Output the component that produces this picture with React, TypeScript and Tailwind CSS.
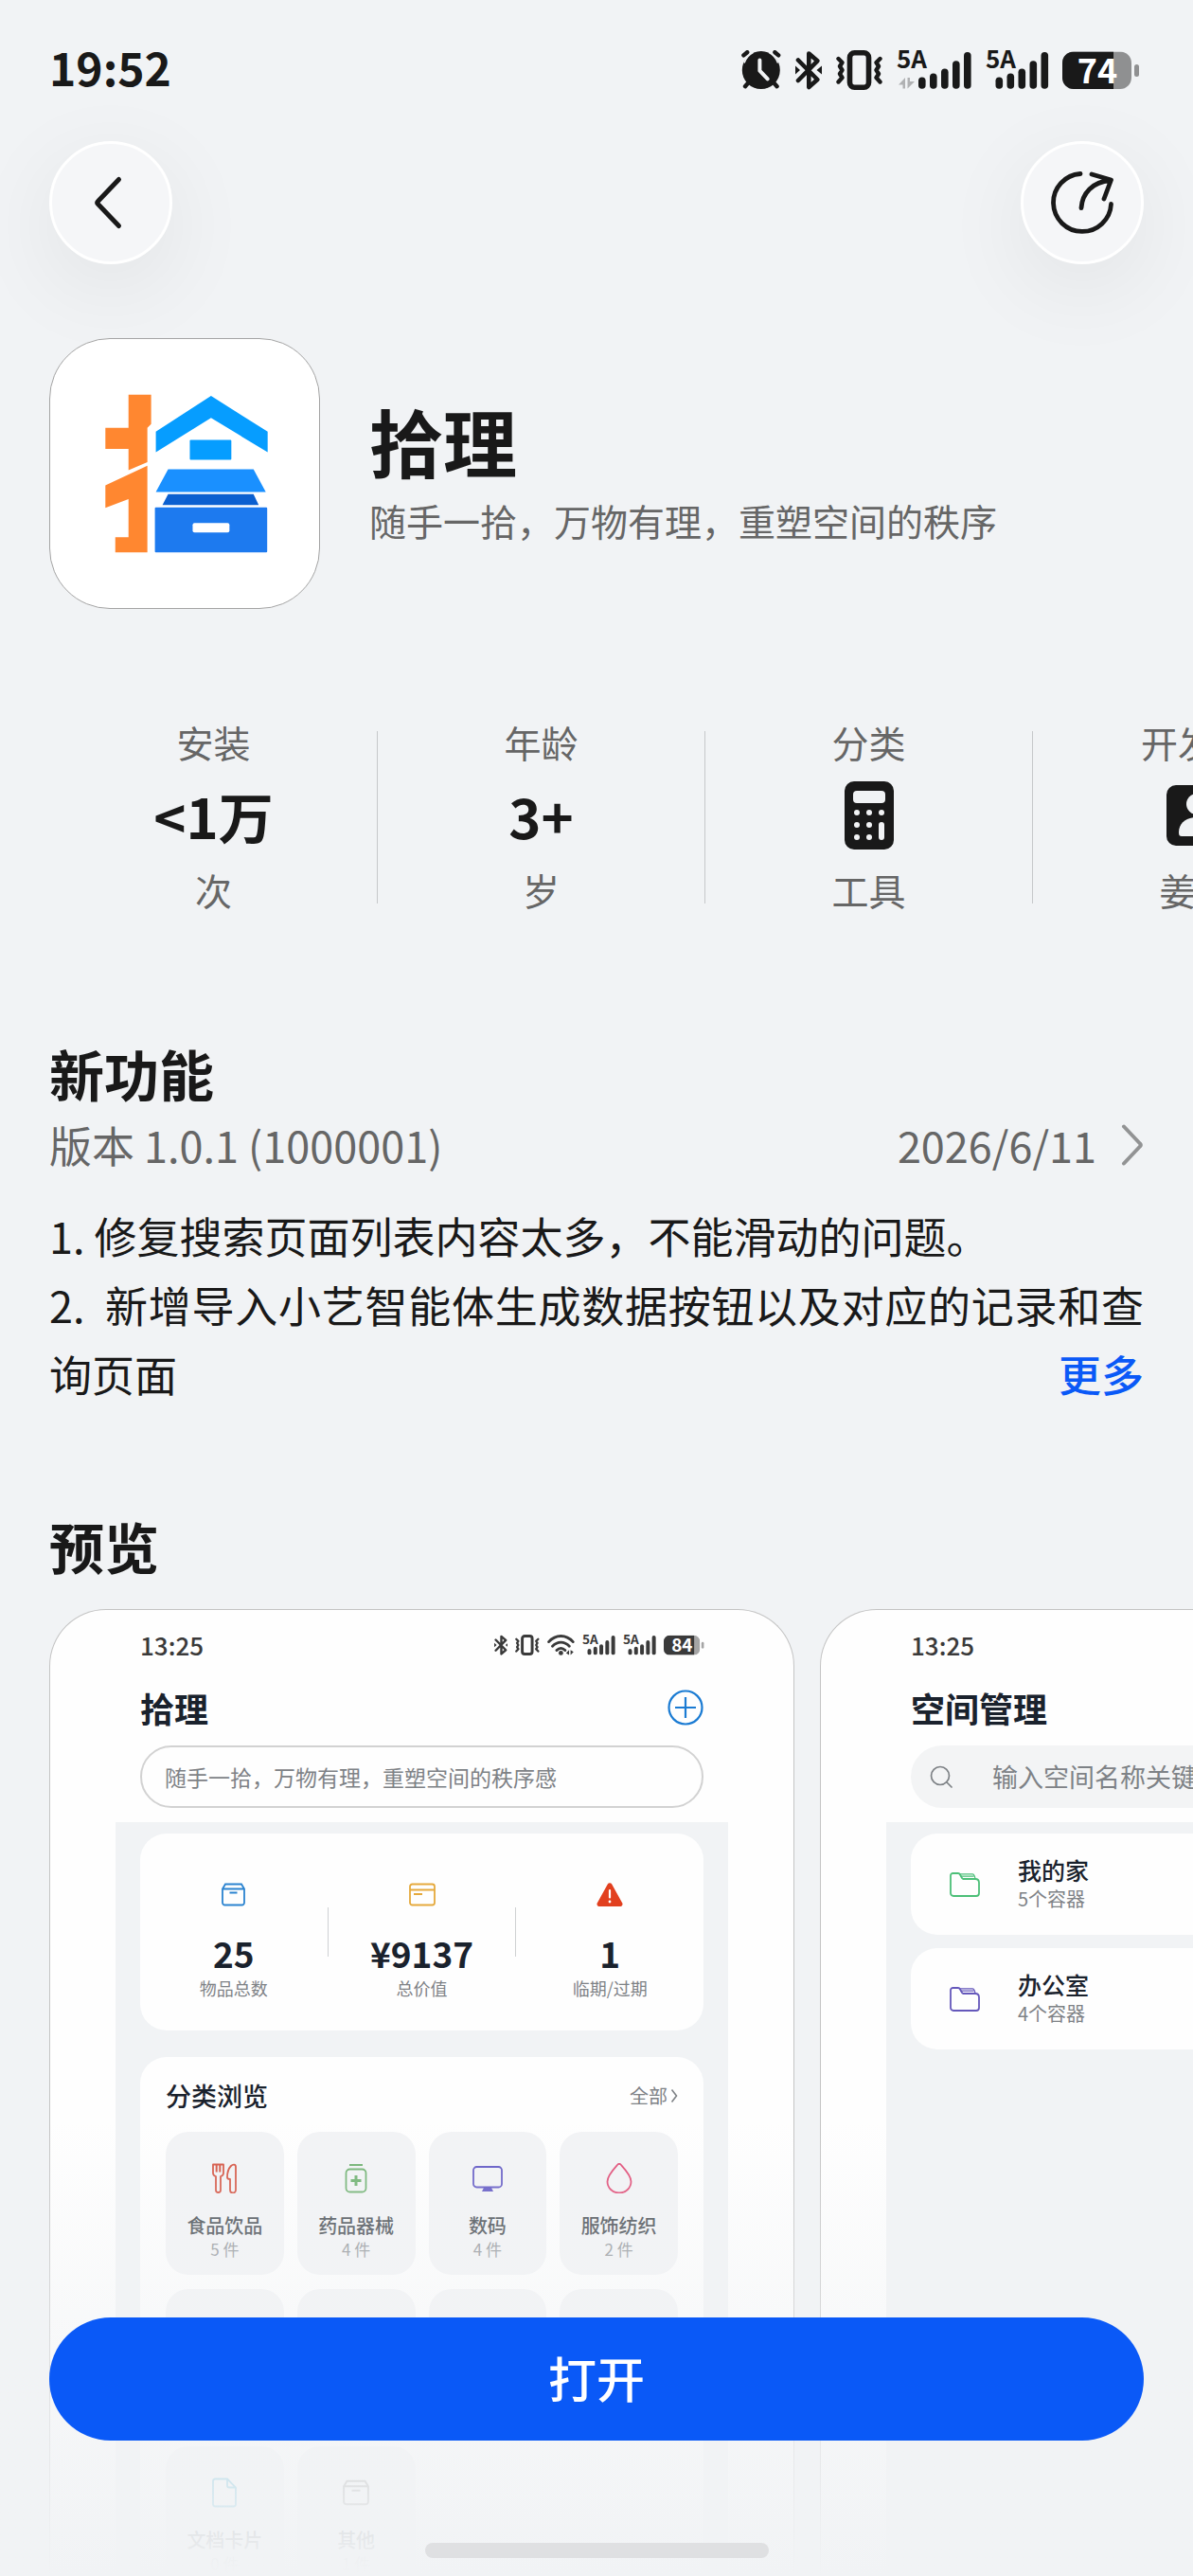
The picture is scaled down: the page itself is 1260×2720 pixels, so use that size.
import React from 'react';

// ============================================
// App store detail page
// ============================================

interface IconProps {
  className?: string;
}

interface BatteryProps extends IconProps {
  level: number;
}

interface SignalProps extends IconProps {
  activity?: boolean;
}

/* ---------- Status bar icons ---------- */

function AlarmIcon({ className }: IconProps) {
  return (
    <svg viewBox="0 0 42 42" className={className} fill="currentColor" aria-hidden="true">
      <circle cx="20.8" cy="21" r="20" />
      <path d="M3 13.4A20 20 0 0 1 12.6 2.4M29 2.4a20 20 0 0 1 9.6 11" fill="none" stroke="#f1f3f5" strokeWidth="1.6" />
      <g stroke="currentColor" strokeWidth="4.4" strokeLinecap="round">
        <path d="M2.4 5.4 6.2 2.2M39.2 5.4 35.4 2.2M9 32.5 4 38.2M32.6 32.5l5 5.7" />
      </g>
      <path
        d="M19.4 10.5v11.2l8.3 8.6"
        fill="none"
        stroke="#f1f3f5"
        strokeWidth="4"
        strokeLinecap="round"
        strokeLinejoin="round"
      />
    </svg>
  );
}

function BluetoothIcon({ className }: IconProps) {
  return (
    <svg viewBox="0 0 28 42" className={className} fill="none" aria-hidden="true">
      <path
        d="M3 10.5 23.3 31 14.3 39V3.5l9 7.8L3 32"
        stroke="currentColor"
        strokeWidth="4.6"
        strokeLinecap="round"
        strokeLinejoin="round"
      />
      <path d="M0 16.5 5 21 0 25.5zM28 16.5 22.5 21l5.5 4.5z" fill="currentColor" />
    </svg>
  );
}

function VibrateIcon({ className }: IconProps) {
  return (
    <svg viewBox="0 0 49 42" className={className} fill="none" stroke="currentColor" aria-hidden="true">
      <rect x="14.5" y="2.8" width="20" height="36.4" rx="5" strokeWidth="5.6" />
      <path
        d="M2.5 9l4 4-2.5 4 2.5 4-2.5 4 2.5 4-4 4.500M46.500 9l-4 4 2.500 4-2.500 4 2.500 4-2.500 4 4 4.500"
        strokeWidth="4.4"
        strokeLinecap="round"
        strokeLinejoin="round"
      />
    </svg>
  );
}

function WifiIcon({ className }: IconProps) {
  return (
    <svg viewBox="0 0 56 42" className={className} fill="none" stroke="currentColor" aria-hidden="true">
      <path
        d="M3 14.5C17-1 38-1 52 14.5M10.5 23.5c10-10.5 24-10.5 34 0M19 31.5c5.5-5.5 11.5-5.5 17 0"
        strokeWidth="5.4"
        strokeLinecap="round"
      />
      <circle cx="27.5" cy="37" r="4.6" fill="currentColor" stroke="none" />
      <path d="M38 37 44 31v10zM47 31v10l6-6z" fill="currentColor" stroke="none" />
    </svg>
  );
}

function SignalIcon({ className, activity }: SignalProps) {
  const start = activity ? 23 : 10.5;
  const tops = [28.5, 24.5, 19.5, 11.3, 2];

  return (
    <svg
      viewBox={activity ? '0 0 79 42' : '0 0 66 42'}
      className={`overflow-visible ${className}`}
      fill="currentColor"
      aria-hidden="true"
    >
      <text x="0" y="19" fontSize="26" fontWeight="600">
        5A
      </text>
      {activity && <path opacity="0.3" d="M2 36.5 9 29v11.5H6.5v-4zM11.5 29v11.5L19 33h-5v-4z" />}
      {tops.map((top, i) => (
        <rect key={top} x={start + i * 12} y={top} width="7.6" height={40.8 - top} rx="3.8" />
      ))}
    </svg>
  );
}

function BatteryIcon({ className, level }: BatteryProps) {
  return (
    <svg viewBox="0 0 81 42" className={`overflow-visible ${className}`} aria-hidden="true">
      <defs>
        <clipPath id={`battery-${level}`}>
          <rect y="1.5" width="73" height="39.5" rx="12" />
        </clipPath>
      </defs>
      <g clipPath={`url(#battery-${level})`} fill="currentColor">
        <rect y="1.5" width="73" height="39.5" opacity="0.45" />
        <rect y="1.5" width={(73 * level) / 100} height="39.5" />
      </g>
      <rect x="76" y="15" width="5" height="13" rx="2.5" fill="currentColor" opacity="0.45" />
      <text x="37" y="34.5" fontSize="36" fontWeight="700" textAnchor="middle" fill="#fff">
        {level}
      </text>
    </svg>
  );
}

/* ---------- App icons ---------- */

function AppLogo() {
  return (
    <svg viewBox="0 0 285 285" className="w-full" aria-hidden="true">
      <g fill="#ff8730">
        <path d="M83 59h24v31l-4 4v36.5L83 139v-22.5H58.5V94H83z" />
        <path d="M103 134.3V226H69v-16h14v-40.5L58.5 179v-24z" />
      </g>
      <g fill="#069dff">
        <path d="M170.5 60.3 230.5 98v22l-60-36.5L112 120V98z" />
        <rect x="148" y="107" width="44" height="21" rx="1" />
      </g>
      <path d="M125 138h90.5l13 24H112z" fill="#1a90ff" />
      <path d="M125 164.3h90.5l5.5 11.5H119z" fill="#0a5fd0" />
      <rect x="111" y="178.3" width="119" height="47.7" rx="1" fill="#1d7aef" />
      <rect x="151" y="195" width="39" height="10" rx="2" fill="#fff" />
    </svg>
  );
}

function CalculatorIcon() {
  return (
    <svg viewBox="0 0 52 72" className="h-[72px]" aria-hidden="true">
      <rect width="52" height="72" rx="10" fill="#191919" />
      <g fill="#f1f3f5">
        <rect x="9" y="10" width="34" height="13" rx="4" />
        {[33, 46, 59].map((y) =>
          [13, 26, 39].map((x) => (x === 39 && y > 40 ? null : <circle key={`${x}-${y}`} cx={x} cy={y} r="3" />))
        )}
        <rect x="36" y="43" width="6" height="19" rx="3" />
      </g>
    </svg>
  );
}

function ContactIcon() {
  return (
    <svg viewBox="0 0 64 64" className="h-16" aria-hidden="true">
      <rect width="64" height="64" rx="10" fill="#191919" />
      <circle cx="32" cy="20" r="11" fill="#f1f3f5" />
      <path d="M13 50c0-10 8-16 19-16s19 6 19 16c0 3-1 4-3 4H16c-2 0-3-1-3-4z" fill="#f1f3f5" />
    </svg>
  );
}

function BoxIcon({ className }: IconProps) {
  return (
    <svg viewBox="0 0 25 25" className={className} fill="none" stroke="currentColor" strokeWidth="1.8" aria-hidden="true">
      <path d="M1 6.5 4 1.5h17l3 5V21a2.5 2.5 0 0 1-2.5 2.5h-18A2.5 2.5 0 0 1 1 21zM1 6.5h23M8.5 10.5h8" />
    </svg>
  );
}

function WalletIcon({ className }: IconProps) {
  return (
    <svg viewBox="0 0 28 25" className={className} fill="none" stroke="currentColor" strokeWidth="1.8" aria-hidden="true">
      <rect x="1" y="1.5" width="26" height="22" rx="2.5" />
      <path d="M1 7.5h26M5 12h9" />
    </svg>
  );
}

function WarningIcon({ className }: IconProps) {
  return (
    <svg viewBox="0 0 28 25" className={className} aria-hidden="true">
      <path d="M11.8 1.5a2.5 2.5 0 0 1 4.400 0L27 21a2.500 2.500 0 0 1-2.200 4H3.200A2.500 2.500 0 0 1 1 21z" fill="#e2401f" />
      <path d="M14 8v7.5" stroke="#fff" strokeWidth="2.2" strokeLinecap="round" />
      <circle cx="14" cy="20" r="1.4" fill="#fff" />
    </svg>
  );
}

function CutleryIcon() {
  return (
    <svg viewBox="0 0 32 32" className="size-8 text-[#d4513f]" fill="none" stroke="currentColor" strokeWidth="1.8" aria-hidden="true">
      <path d="M4 1.5v9c0 2 1 3 3 3.5v14.5a2.5 2.5 0 0 0 5 0V14c2-.5 3-1.5 3-3.5v-9z" strokeLinejoin="round" />
      <path d="M7.7 1.5v8M11.3 1.5v8" strokeWidth="2" />
      <path d="M28 28V4c0-3-3-3-5-1-3 3-4 7-4 12 0 1 1 2 3 2v11.500a3 3 0 0 0 6 0z" strokeLinejoin="round" />
    </svg>
  );
}

function MedicineIcon() {
  return (
    <svg viewBox="0 0 32 32" className="size-8 text-[#6fb170]" fill="none" stroke="currentColor" strokeWidth="1.8" aria-hidden="true">
      <path d="M9 2h14" strokeWidth="2" />
      <rect x="5.5" y="6.5" width="21" height="24" rx="4" />
      <path d="M16 13v11M10.500 18.500h11" strokeWidth="3" />
    </svg>
  );
}

function MonitorIcon() {
  return (
    <svg viewBox="0 0 32 32" className="size-8 text-[#6057c4]" fill="none" stroke="currentColor" strokeWidth="1.8" aria-hidden="true">
      <rect x="1" y="4" width="30" height="21.5" rx="3.5" />
      <path d="M12 26h8l2 4H10z" fill="currentColor" stroke="none" />
    </svg>
  );
}

function DropIcon() {
  return (
    <svg viewBox="0 0 32 32" className="size-8 text-[#e04a74]" fill="none" stroke="currentColor" strokeWidth="1.8" aria-hidden="true">
      <path d="M14.5 1.5a2 2 0 0 1 3 0C22 6.5 28.5 13 28.5 19.500a12.500 12 0 0 1-25 0C3.500 13 10 6.500 14.500 1.500z" />
    </svg>
  );
}

function DocumentIcon() {
  return (
    <svg viewBox="0 0 32 32" className="size-8 text-[#39a9cf]" fill="none" stroke="currentColor" strokeWidth="1.8" aria-hidden="true">
      <path d="M6 1.5h13l9 9V28a2.5 2.5 0 0 1-2.5 2.5h-19A2.500 2.500 0 0 1 4 28V4a2.500 2.500 0 0 1 2-2.500zM19 1.500v7a2 2 0 0 0 2 2h7" />
    </svg>
  );
}

function FolderIcon({ className }: IconProps) {
  return (
    <svg
      viewBox="0 0 32 26"
      className={className}
      fill="none"
      stroke="currentColor"
      strokeWidth="1.8"
      strokeLinejoin="round"
      aria-hidden="true"
    >
      <path d="M3.5 1H9c1 0 1.500.5 2 1.500L13 6c.4.7.8 1 1.500 1H27c2.500 0 4 1.500 4 4v11a3 3 0 0 1-3 3H4a3 3 0 0 1-3-3V3.500A2.500 2.500 0 0 1 3.500 1z" />
      <path d="M10 1.8h14c1.200 0 2.500 1.500 3 5M11.500 4.200h14" strokeWidth="1.2" />
    </svg>
  );
}

/* ---------- Page sections ---------- */

function StatusBar() {
  return (
    <div className="flex justify-between pt-[44px] pr-[57px] pl-[52px] text-[#191919]">
      <time className="text-[48px] leading-[52px] font-bold">19:52</time>
      <div className="flex h-[60px] items-center gap-[15px]">
        <AlarmIcon className="h-[42px]" />
        <BluetoothIcon className="h-[42px]" />
        <VibrateIcon className="h-[42px]" />
        <SignalIcon className="h-[42px]" activity />
        <SignalIcon className="h-[42px]" />
        <BatteryIcon className="h-[42px]" level={74} />
      </div>
    </div>
  );
}

function NavBar() {
  return (
    <nav className="mt-[45px] flex justify-between px-[52px]">
      <button
        type="button"
        aria-label="返回"
        className="flex size-[130px] items-center justify-center rounded-full border-[3px] border-white bg-[#f5f6f8] shadow-[0_24px_96px_rgba(0,0,0,0.07)]"
      >
        <svg viewBox="0 0 66 66" className="size-[66px]" fill="none" stroke="#191919" strokeWidth="5" strokeLinecap="round" strokeLinejoin="round">
          <path d="M41.5 8.5 19.500 31.500c-1 1-1 2 0 3l22 23" />
        </svg>
      </button>
      <button
        type="button"
        aria-label="分享"
        className="flex size-[130px] items-center justify-center rounded-full border-[3px] border-white bg-[#f5f6f8] shadow-[0_24px_96px_rgba(0,0,0,0.07)]"
      >
        <svg viewBox="0 0 66 66" className="size-[66px]" fill="none" stroke="#191919" strokeWidth="4.8" strokeLinecap="round" strokeLinejoin="round">
          <path d="M31 2.500A30.500 30.500 0 1 0 63.500 34.500" />
          <path d="M32 38.500C33 23 44 11 62.500 9.500M43 3l20.500 6-7.500 20" />
        </svg>
      </button>
    </nav>
  );
}

interface StatProps {
  label: string;
  unit: string;
  children: React.ReactNode;
}

function Stat({ label, unit, children }: StatProps) {
  return (
    <div className="flex w-[346px] shrink-0 items-center">
      <dl className="flex flex-1 flex-col items-center gap-3 text-[39px] leading-[52px] whitespace-nowrap text-[#666]">
        <dt>{label}</dt>
        <dd className="flex h-20 items-center text-[58px] font-bold text-[#191919]">{children}</dd>
        <dd>{unit}</dd>
      </dl>
      <div className="mt-1 h-[182px] w-px bg-[#c6c8ca]" />
    </div>
  );
}

const summary = [
  { icon: <BoxIcon className="h-[25px] text-[#2b83d0]" />, value: '25', label: '物品总数' },
  { icon: <WalletIcon className="h-[25px] text-[#e5a93c]" />, value: '¥9137', label: '总价值' },
  { icon: <WarningIcon className="h-[25px]" />, value: '1', label: '临期/过期' },
];

const categories = [
  { name: '食品饮品', count: '5 件', icon: <CutleryIcon /> },
  { name: '药品器械', count: '4 件', icon: <MedicineIcon /> },
  { name: '数码', count: '4 件', icon: <MonitorIcon /> },
  { name: '服饰纺织', count: '2 件', icon: <DropIcon /> },
  null,
  null,
  null,
  null,
  { name: '文档卡片', count: '0 件', icon: <DocumentIcon /> },
  { name: '其他', count: '1 件', icon: <BoxIcon className="size-7 text-[#8a8a8a]" /> },
];

/* First preview: home screen of the app */
function HomePreview() {
  return (
    <article className="w-[787px] shrink-0 rounded-t-[60px] border border-b-0 border-[#c4c4c4] bg-[#fefefe] pt-[21px]">
      <div className="flex items-center justify-between px-[95px] text-[#3a3a3a]">
        <time className="text-[26px] leading-8 font-medium">13:25</time>
        <div className="flex items-center gap-2">
          <BluetoothIcon className="h-[22px]" />
          <VibrateIcon className="h-[22px]" />
          <WifiIcon className="h-[22px]" />
          <SignalIcon className="h-[22px]" />
          <SignalIcon className="h-[22px]" />
          <BatteryIcon className="h-[22px]" level={84} />
        </div>
      </div>
      <div className="mt-[26px] flex items-center justify-between px-[95px]">
        <h3 className="text-[36px] leading-[48px] font-bold text-[#1a222d]">拾理</h3>
        <button type="button" aria-label="添加">
          <svg viewBox="0 0 38 38" className="size-[38px]" fill="none" stroke="#1a7bd3" strokeWidth="2.2">
            <circle cx="19" cy="19" r="17.5" />
            <path d="M19 8v22M8 19h22" />
          </svg>
        </button>
      </div>
      <div className="mt-4 px-[95px]">
        <input
          type="text"
          aria-label="搜索物品"
          placeholder="随手一拾，万物有理，重塑空间的秩序感"
          className="h-[66px] w-full rounded-full border-2 border-[#d2d2d2] bg-transparent px-6 text-[23px] placeholder:text-[#7e8286]"
        />
      </div>
      <div className="mx-[69px] mt-[15px] bg-[#f1f3f5] px-[26px] pt-3 pb-32">
        <section className="flex h-[208px] items-center rounded-[28px] bg-[#fefefe]">
          {summary.map((item, i) => (
            <React.Fragment key={item.label}>
              {i > 0 && <div className="h-[52px] w-px bg-[#cfd1d3]" />}
              <div className="flex flex-1 basis-0 flex-col items-center pt-5">
                {item.icon}
                <strong className="mt-[27px] text-[37px] leading-[44px] font-bold text-[#1a222d]">{item.value}</strong>
                <span className="mt-[2px] text-[18px] leading-[26px] text-[#7e8286]">{item.label}</span>
              </div>
            </React.Fragment>
          ))}
        </section>
        <section className="mt-7 rounded-[28px] bg-[#fefefe] px-[27px] pt-[23px] pb-7">
          <div className="flex items-center justify-between leading-9">
            <h4 className="text-[27px] font-medium text-[#1a222d]">分类浏览</h4>
            <a href="#all" className="flex items-center gap-[3px] text-[20px] text-[#7e8286]">
              全部
              <svg viewBox="0 0 8 16" className="h-4" fill="none" stroke="currentColor" strokeWidth="1.6">
                <path d="M1.5 1.5 6.5 8l-5 6.500" />
              </svg>
            </a>
          </div>
          <div className="mt-5 grid grid-cols-4 gap-x-[14px] gap-y-[15px]">
            {categories.map((item, i) => (
              <div key={i} className="flex h-[151px] flex-col items-center rounded-[24px] bg-[#f2f3f5] pt-[33px]">
                {item && (
                  <>
                    <div className="flex size-8 items-center justify-center">{item.icon}</div>
                    <span className="mt-5 text-[20px] leading-7 font-medium text-[#42484e]">{item.name}</span>
                    <span className="text-[17px] leading-[22px] text-[#909498]">{item.count}</span>
                  </>
                )}
              </div>
            ))}
          </div>
        </section>
      </div>
    </article>
  );
}

const spaces = [
  { name: '我的家', detail: '5个容器', color: 'text-[#4cbf78]' },
  { name: '办公室', detail: '4个容器', color: 'text-[#6558bb]' },
];

/* Second preview: list of spaces */
function SpacesPreview() {
  return (
    <article className="w-[787px] shrink-0 rounded-t-[60px] border border-b-0 border-[#c4c4c4] bg-[#fefefe] pt-[21px]">
      <time className="block px-[95px] text-[26px] leading-8 font-medium text-[#3a3a3a]">13:25</time>
      <h3 className="mt-[26px] px-[95px] text-[36px] leading-[48px] font-bold text-[#1a222d]">空间管理</h3>
      <div className="mx-[95px] mt-4 flex h-[66px] items-center rounded-full bg-[#f3f4f5] pl-5">
        <svg viewBox="0 0 24 24" className="size-6 shrink-0" fill="none" stroke="#7e8286" strokeWidth="1.7" strokeLinecap="round">
          <circle cx="11" cy="11" r="9.5" />
          <path d="m18 18 5 5" />
        </svg>
        <input
          type="text"
          aria-label="搜索空间"
          placeholder="输入空间名称关键词"
          className="ml-[42px] w-full bg-transparent text-[27px] placeholder:text-[#7e8286]"
        />
      </div>
      <div className="mx-[69px] mt-[15px] flex h-[1100px] flex-col gap-[14px] bg-[#f1f3f5] px-[26px] pt-3">
        {spaces.map((space) => (
          <div key={space.name} className="flex h-[107px] items-center gap-10 rounded-[28px] bg-[#fefefe] pl-[41px]">
            <FolderIcon className={`w-8 ${space.color}`} />
            <div className="pb-1">
              <h4 className="text-[25px] leading-[34px] font-medium text-[#1a222d]">{space.name}</h4>
              <p className="text-[20px] leading-7 text-[#7e8286]">{space.detail}</p>
            </div>
          </div>
        ))}
      </div>
    </article>
  );
}

export default function App() {
  return (
    <div className="relative h-screen overflow-hidden bg-[#f1f3f5] font-['Noto_Sans_CJK_SC','Noto_Sans',sans-serif] text-[#191919]">
      <StatusBar />
      <NavBar />

      {/* App title */}
      <header className="mt-[78px] flex items-center gap-[52px] px-[52px]">
        <div className="size-[286px] shrink-0 overflow-hidden rounded-[64px] border border-[#a4a4a4] bg-white">
          <AppLogo />
        </div>
        <div className="pb-[6px]">
          <h1 className="text-[78px] leading-[96px] font-bold">拾理</h1>
          <p className="mt-2 text-[39px] leading-[56px] text-[#666]">随手一拾，万物有理，重塑空间的秩序</p>
        </div>
      </header>

      {/* Key figures */}
      <section className="mt-[114px] flex overflow-hidden pl-[53px]">
        <Stat label="安装" unit="次">
          &lt;1万
        </Stat>
        <Stat label="年龄" unit="岁">
          3+
        </Stat>
        <Stat label="分类" unit="工具">
          <CalculatorIcon />
        </Stat>
        <Stat label="开发者" unit="姜某">
          <ContactIcon />
        </Stat>
      </section>

      {/* What's new */}
      <section className="mt-[130px] px-[52px]">
        <h2 className="text-[58px] leading-[76px] font-bold">新功能</h2>
        <div className="mt-2 flex items-center justify-between text-[45px] leading-[60px] text-[#666]">
          <span>版本 1.0.1 (1000001)</span>
          <a href="#history" className="flex items-center gap-[26px]">
            2026/6/11
            <svg viewBox="0 0 24 44" className="h-11" fill="none" stroke="#929394" strokeWidth="4" strokeLinecap="round" strokeLinejoin="round">
              <path d="M3 2.5 20 20.500c1 1 1 2 0 3L3 41.500" />
            </svg>
          </a>
        </div>
        <div className="mt-[29px] text-justify text-[45px] leading-[73px]">
          <p>1. 修复搜索页面列表内容太多，不能滑动的问题。</p>
          <p>
            2.&nbsp; 新增导入小艺智能体生成数据按钮以及对应的记录和查询页面
            <button type="button" className="float-right font-medium text-[#0a59f7]">
              更多
            </button>
          </p>
        </div>
      </section>

      {/* Preview */}
      <section className="mt-[107px]">
        <h2 className="px-[52px] text-[58px] leading-[76px] font-bold">预览</h2>
        <div className="mt-[29px] flex items-stretch gap-[27px] overflow-hidden pl-[52px]">
          <HomePreview />
          <SpacesPreview />
        </div>
      </section>

      {/* Bottom action */}
      <div className="absolute inset-x-0 bottom-0 flex flex-col items-center bg-linear-to-b from-[#f1f3f5]/0 via-[#f1f3f5]/75 via-70% to-[#f1f3f5] px-[52px] pt-[207px] pb-[19px]">
        <button type="button" className="h-[130px] w-full rounded-full bg-[#0a59f7] pb-1 text-[51px] font-medium text-white">
          打开
        </button>
        <div className="mt-[108px] h-4 w-[363px] rounded-full bg-[#dfe0e2]" />
      </div>
    </div>
  );
}
